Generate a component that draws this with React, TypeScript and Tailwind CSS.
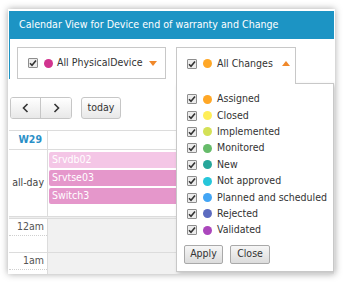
import React from "react";

const font = "font-['Tahoma','DejaVu_Sans_Condensed',sans-serif]";

const changes: { label: string; color: string }[] = [
  { label: "Assigned", color: "bg-[#ffa726]" },
  { label: "Closed", color: "bg-[#ffee58]" },
  { label: "Implemented", color: "bg-[#d4e157]" },
  { label: "Monitored", color: "bg-[#66bb6a]" },
  { label: "New", color: "bg-[#26a69a]" },
  { label: "Not approved", color: "bg-[#26c6da]" },
  { label: "Planned and scheduled", color: "bg-[#42a5f5]" },
  { label: "Rejected", color: "bg-[#5c6bc0]" },
  { label: "Validated", color: "bg-[#ab47bc]" },
];

const events = [
  { title: "Srvdb02", color: "bg-[#f4c6e6]" },
  { title: "Srvtse03", color: "bg-[#e597cb]" },
  { title: "Switch3", color: "bg-[#e597cb]" },
];

function Check() {
  return (
    <span className="flex h-[10px] w-[10px] shrink-0 items-center justify-center rounded-[1px] border border-[#8e8e8e] bg-[#ececec]">
      <svg width="8" height="8" viewBox="0 0 8 8">
        <path d="M1 4.2 L3 6.2 L7 1.5" fill="none" stroke="#333" strokeWidth="1.6" />
      </svg>
    </span>
  );
}

function Dot({ color }: { color: string }) {
  return <span className={`block h-[9px] w-[9px] shrink-0 rounded-full ${color}`} />;
}

function Chevron({ dir }: { dir: "left" | "right" }) {
  return (
    <svg width="7" height="10" viewBox="0 0 7 10">
      <path
        d={dir === "left" ? "M5.5 1 L1.5 5 L5.5 9" : "M1.5 1 L5.5 5 L1.5 9"}
        fill="none"
        stroke="#333"
        strokeWidth="1.6"
      />
    </svg>
  );
}

function ChangesFilter() {
  return (
    <div className="relative ml-[10px]">
      <div className="relative z-20 h-[37px] w-[120px] border border-b-0 border-[#c8c8c8] bg-white pl-[10px]">
        <div className="flex h-[31px] items-center">
          <Check />
          <span className="ml-[6px] flex">
            <Dot color="bg-[#ffa726]" />
          </span>
          <span className="ml-[5px] text-[10.5px] text-[#333]">All Changes</span>
          <span className="ml-[9px] h-0 w-0 border-x-[4px] border-b-[5px] border-x-transparent border-b-[#f0882a]" />
        </div>
      </div>
      <div className="absolute left-0 top-[36px] z-10 h-[189px] w-[158px] border border-[#c8c8c8] bg-white pl-[10px] pt-[7px] shadow-[2px_2px_4px_rgba(0,0,0,0.2)]">
        {changes.map((c) => (
          <div key={c.label} className="flex h-[16.4px] items-center">
            <Check />
            <span className="ml-[6px] flex">
              <Dot color={c.color} />
            </span>
            <span className="ml-[5px] whitespace-nowrap text-[10.5px] text-[#333]">{c.label}</span>
          </div>
        ))}
        <div className="-ml-[3px] mt-[6px] flex gap-[7px]">
          <button className="h-[19px] w-[39px] rounded-[2px] border border-[#a9a9a9] bg-gradient-to-b from-[#f6f6f6] to-[#dcdcdc] text-[10.5px] text-[#333]">
            Apply
          </button>
          <button className="h-[19px] w-[40px] rounded-[2px] border border-[#a9a9a9] bg-gradient-to-b from-[#f6f6f6] to-[#dcdcdc] text-[10.5px] text-[#333]">
            Close
          </button>
        </div>
      </div>
    </div>
  );
}

export default function App() {
  return (
    <div className={`h-[283px] w-[343px] overflow-hidden bg-white pl-[8px] pt-[9px] ${font}`}>
      <div className="relative h-[265px] w-[327px] overflow-hidden bg-white px-px pt-[2px] shadow-[0_0_7px_rgba(0,0,0,0.35)]">
        <div className="flex h-[28px] items-center bg-[#1c94c4] pl-[10px] text-[10.6px] text-white">
          Calendar View for Device end of warranty and Change
        </div>

        <div className="border-l border-[#1c94c4] pl-[7px] pt-[8px]">
          <div className="flex h-[32px] items-start">
            <div className="flex h-[32px] w-[149px] items-center border border-[#c8c8c8] pl-[10px]">
              <Check />
              <span className="ml-[6px] flex">
                <Dot color="bg-[#d1348f]" />
              </span>
              <span className="ml-[4px] text-[10.5px] text-[#333]">All PhysicalDevice</span>
              <span className="ml-auto mr-[8px] h-0 w-0 border-x-[4px] border-t-[5px] border-x-transparent border-t-[#f0882a]" />
            </div>
            <ChangesFilter />
          </div>
        </div>

        <div className="mt-[18px] flex pl-[1px]">
          <div className="flex h-[22px] overflow-hidden rounded-[3px] border border-[#c6c6c6] shadow-[inset_0_1px_0_#fff]">
            <div className="flex w-[30px] items-center justify-center border-r border-[#c6c6c6] bg-gradient-to-b from-white to-[#e8e8e8]">
              <Chevron dir="left" />
            </div>
            <div className="flex w-[30px] items-center justify-center bg-gradient-to-b from-white to-[#e8e8e8]">
              <Chevron dir="right" />
            </div>
          </div>
          <div className="ml-[9px] flex h-[22px] w-[40px] items-center justify-center rounded-[3px] border border-[#c6c6c6] bg-gradient-to-b from-white to-[#e8e8e8] text-[10.5px] text-[#333]">
            today
          </div>
        </div>

        <div className="mt-[11px] border-t border-[#dcdcdc] text-[10.5px]">
          <div className="flex h-[19px] border-b border-[#dcdcdc]">
            <div className="flex w-[39px] items-center justify-end border-r border-[#dcdcdc] pr-[5px] font-bold text-[#2a8fc7]">
              W29
            </div>
            <div className="flex-1" />
          </div>
          <div className="flex h-[66px]">
            <div className="flex w-[39px] items-center justify-end border-r border-[#dcdcdc] pr-[3px] text-[#444]">
              all-day
            </div>
            <div className="flex flex-1 flex-col gap-[2px] pl-[1px] pr-[2px] pt-[2px]">
              {events.map((e) => (
                <div
                  key={e.title}
                  className={`flex h-[16px] items-center rounded-[2px] px-[3px] text-white ${e.color}`}
                >
                  {e.title}
                </div>
              ))}
            </div>
          </div>
          <div className="h-[3px] border-y border-[#dcdcdc] bg-[#eeeeee]" />
          {["12am", "1am"].map((t) => (
            <div key={t} className="flex h-[34px] border-b border-[#dcdcdc]">
              <div className="flex w-[39px] flex-col border-r border-[#dcdcdc]">
                <div className="flex h-[17px] items-center justify-end border-b border-dotted border-[#cfcfcf] pr-[3px] text-[#555]">
                  {t}
                </div>
              </div>
              <div className="flex-1 bg-[#f1f1f1]" />
            </div>
          ))}
        </div>
      </div>
    </div>
  );
}
